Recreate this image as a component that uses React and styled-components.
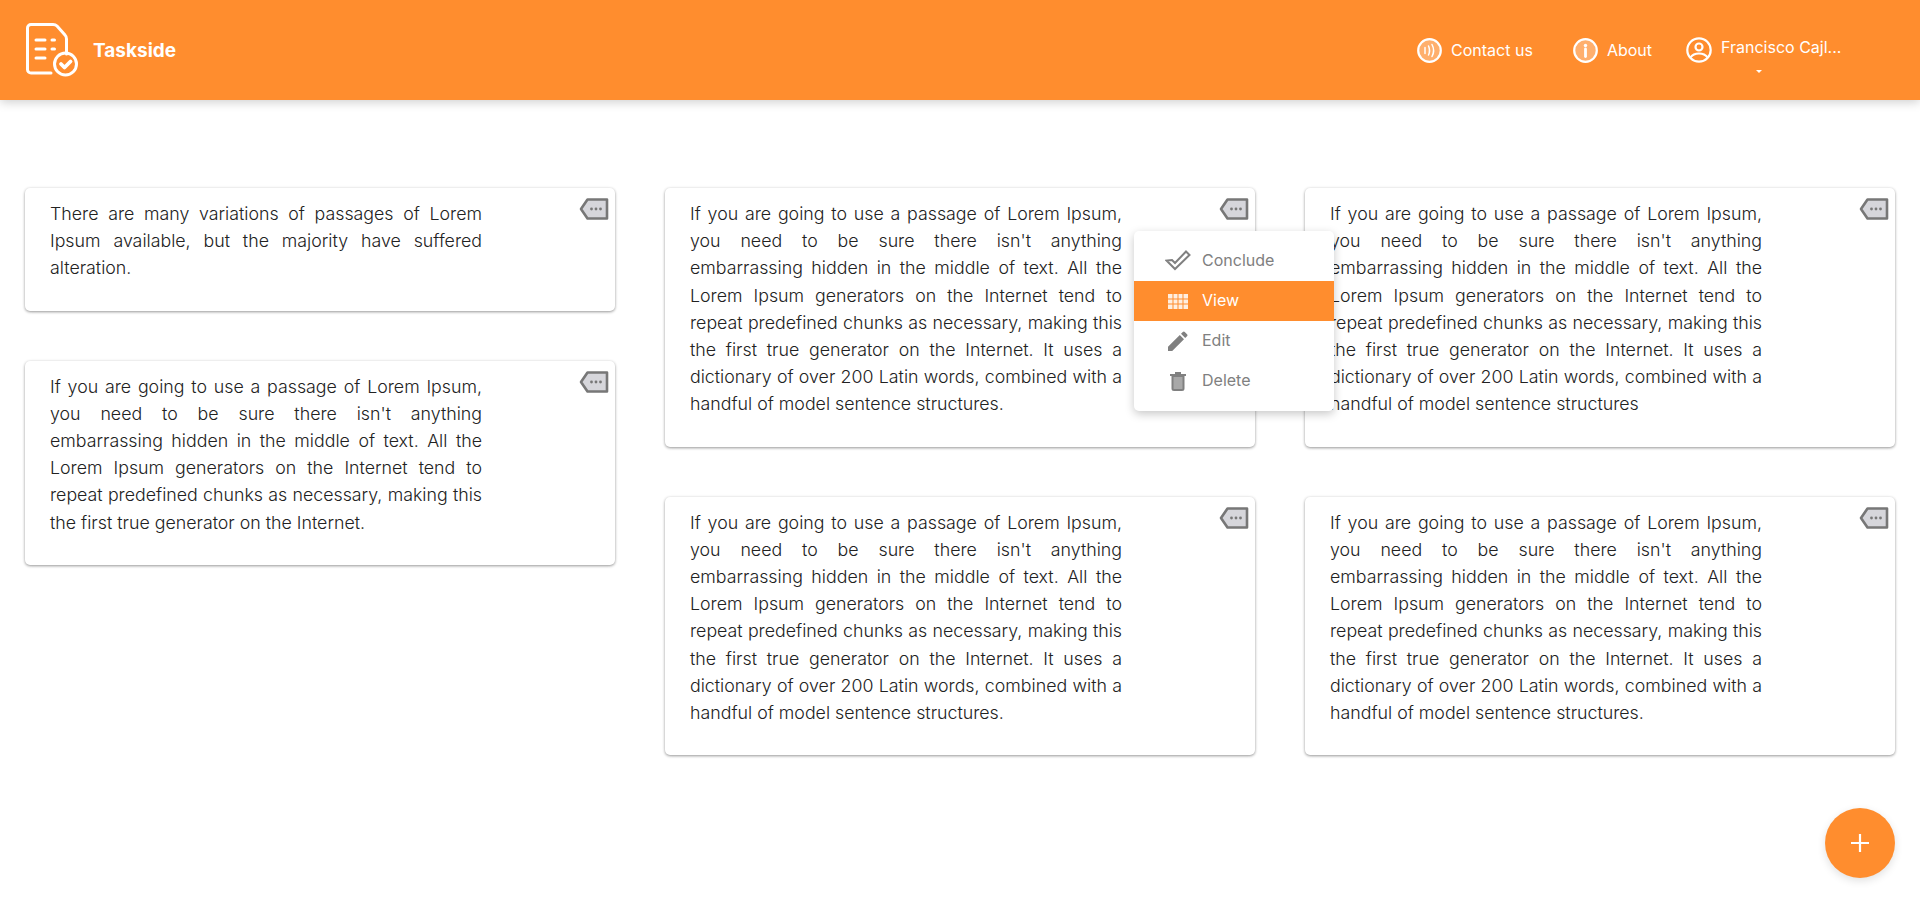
import React from "react";
import styled, { createGlobalStyle } from "styled-components";

const ORANGE = "#ff8d2e";

const GlobalStyle = createGlobalStyle`
  html, body {
    margin: 0;
    padding: 0;
    background: #fff;
    font-family: Inter, "Liberation Sans", sans-serif;
  }
  * { box-sizing: border-box; }
`;

const Page = styled.div`
  height: 900px;
  overflow: hidden;
  position: relative;
`;

const Header = styled.header`
  height: 100px;
  background: ${ORANGE};
  color: #fff;
  display: flex;
  align-items: center;
  justify-content: space-between;
  padding: 0 77px 0 26px;
  box-shadow: 0 2px 10px rgba(0, 0, 0, 0.2);
`;

const Brand = styled.div`
  display: flex;
  align-items: center;
  gap: 14px;
  font-size: 19px;
  font-weight: 700;
`;

const Nav = styled.nav`
  display: flex;
  align-items: center;
  gap: 40px;
  font-size: 16px;
  font-weight: 400;
`;

const NavItem = styled.div`
  display: flex;
  align-items: center;
  gap: 9px;
`;

const UserItem = styled(NavItem)`
  margin-left: -6px;
`;

const UserBlock = styled.div`
  display: flex;
  flex-direction: column;
  align-items: center;
  gap: 13px;
  margin-top: 10px;
`;

const UserName = styled.span`
  width: 122px;
  line-height: 19px;
  white-space: nowrap;
`;

const Caret = styled.span`
  width: 0;
  height: 0;
  margin-right: 46px;
  border-left: 3px solid transparent;
  border-right: 3px solid transparent;
  border-top: 3px solid #fff;
`;

const Board = styled.main`
  display: grid;
  grid-template-columns: repeat(3, 590px);
  gap: 50px;
  padding: 88px 25px 0;
`;

const Column = styled.div`
  display: flex;
  flex-direction: column;
  gap: 50px;
`;

const Card = styled.article`
  position: relative;
  background: #fff;
  border-radius: 5px;
  padding: 12px 133px 29px 25px;
  box-shadow: 0 1px 3px rgba(0, 0, 0, 0.4), 0 0 4px rgba(0, 0, 0, 0.03);
`;

const CardText = styled.p`
  margin: 0;
  font-size: 17.8px;
  font-weight: 300;
  line-height: 27.2px;
  color: #222;
  text-align: justify;
`;

const TagButton = styled.span`
  position: absolute;
  top: 9px;
  right: 6px;
  display: flex;
`;

const Menu = styled.ul`
  position: absolute;
  top: 43px;
  right: -79px;
  width: 200px;
  margin: 0;
  padding: 10px 0;
  list-style: none;
  background: #fff;
  border-radius: 5px;
  box-shadow: 0 3px 10px rgba(0, 0, 0, 0.22);
  z-index: 2;
`;

const MenuItem = styled.li`
  height: 40px;
  display: flex;
  align-items: center;
  gap: 10px;
  padding: 0 0 2px 30px;
  font-size: 16px;
  color: ${(p) => (p.$active ? "#fff" : "#808080")};
  background: ${(p) => (p.$active ? ORANGE : "transparent")};
`;

const Fab = styled.button`
  position: absolute;
  right: 25px;
  bottom: 22px;
  width: 70px;
  height: 70px;
  border: none;
  border-radius: 50%;
  background: ${ORANGE};
  display: flex;
  align-items: center;
  justify-content: center;
  box-shadow: 0 3px 8px rgba(0, 0, 0, 0.12);
`;

const LogoIcon = () => (
  <svg width="53" height="54" viewBox="0 0 53 54" fill="none" stroke="#fff" strokeWidth="3" strokeLinecap="round" strokeLinejoin="round">
    <path d="M25 50H5a3.500 3.500 0 0 1-3.500-3.500V5A3.500 3.500 0 0 1 5 1.500h22c2 0 3 .5 4 1.500l8 9c1 1 1.500 2 1.500 4v15" />
    <path d="M10 17h9M10 26h9M10 35h9M26 17h2.500M26 26h2.500" />
    <circle cx="39.500" cy="41" r="11" />
    <path d="M35 41l3.500 3.500 6-6" strokeWidth="3.800" />
  </svg>
);

const ContactIcon = () => (
  <svg width="25" height="25" viewBox="0 0 25 25" fill="none" stroke="#fff">
    <circle cx="12.500" cy="12.500" r="11.300" strokeWidth="2.200" fill="rgba(255,255,255,0.3)" />
    <path d="M8 9.500v6M11.500 8c1.300 2.800 1.300 6.200 0 9M15 6.500c2 3.700 2 8.300 0 12" strokeWidth="1.500" strokeLinecap="round" />
  </svg>
);

const InfoIcon = () => (
  <svg width="25" height="25" viewBox="0 0 25 25" fill="none" stroke="#fff">
    <circle cx="12.500" cy="12.500" r="11.300" strokeWidth="2.200" fill="rgba(255,255,255,0.3)" />
    <circle cx="12.500" cy="7.500" r="1.700" fill="#fff" stroke="none" />
    <path d="M12.500 11v7.500" strokeWidth="2.800" strokeLinecap="round" />
  </svg>
);

const UserIcon = () => (
  <svg width="26" height="26" viewBox="0 0 26 26" fill="none" stroke="#fff" strokeWidth="2.200">
    <circle cx="13" cy="13" r="11.700" />
    <circle cx="13" cy="10" r="3.500" />
    <path d="M4.500 20.500C6.500 17.500 9.500 16.500 13 16.500s6.500 1 8.500 4" />
  </svg>
);

const TagIcon = () => (
  <svg width="30" height="24" viewBox="0 0 30 24" fill="#d6d6db" stroke="#777" strokeWidth="2.600" strokeLinejoin="round">
    <path d="M28 2.500H8.500L2 12l6.500 9.500H28z" />
    <g fill="#777" stroke="none">
      <circle cx="12.500" cy="12" r="1.400" />
      <circle cx="17" cy="12" r="1.400" />
      <circle cx="21.500" cy="12" r="1.400" />
    </g>
  </svg>
);

const CheckAllIcon = () => (
  <svg width="26" height="22" viewBox="0 0 26 22" fill="none" stroke="#808080" strokeWidth="2">
    <path d="M1.500 10.500l8.500 8.500L24.500 5 21 1.500 10 13l-3-3z" />
  </svg>
);

const GridIcon = () => (
  <svg width="20" height="15" viewBox="0 0 20 15">
    <rect width="20" height="15" fill="#fff" fillOpacity="0.85" />
    <path d="M5 0v15M10 0v15M15 0v15M0 5h20M0 10h20" stroke={ORANGE} strokeWidth="1" />
  </svg>
);

const PencilIcon = () => (
  <svg width="20" height="20" viewBox="0 0 20 20" fill="#808080">
    <path d="M0 20v-4.200L11.800 4l4.200 4.200L4.200 20zM13 2.800l1.800-1.800a1.400 1.400 0 0 1 2 0l2.200 2.200a1.400 1.400 0 0 1 0 2L17.200 7z" />
  </svg>
);

const TrashIcon = () => (
  <svg width="16" height="19" viewBox="0 0 16 19" fill="none" stroke="#808080" strokeWidth="2">
    <path d="M0 3h16M5 1h6" />
    <path d="M2.500 4h11v12.500a1.500 1.500 0 0 1-1.500 1.500H4a1.500 1.500 0 0 1-1.500-1.500z" fill="#a8a8a8" />
  </svg>
);

const PlusIcon = () => (
  <svg width="18" height="18" viewBox="0 0 18 18" stroke="#fff" strokeWidth="2.200">
    <path d="M9 0v18M0 9h18" />
  </svg>
);

const menuItems = [
  { label: "Conclude", icon: <CheckAllIcon /> },
  { label: "View", icon: <GridIcon />, active: true },
  { label: "Edit", icon: <PencilIcon /> },
  { label: "Delete", icon: <TrashIcon /> },
];

const MenuIconBox = styled.span`
  width: 28px;
  display: flex;
  justify-content: center;
  padding-top: 2px;
`;

const SHORT = "There are many variations of passages of Lorem Ipsum available, but the majority have suffered alteration.";
const MEDIUM = "If you are going to use a passage of Lorem Ipsum, you need to be sure there isn't anything embarrassing hidden in the middle of text. All the Lorem Ipsum generators on the Internet tend to repeat predefined chunks as necessary, making this the first true generator on the Internet.";
const LONG = MEDIUM + " It uses a dictionary of over 200 Latin words, combined with a handful of model sentence structures.";

const columns = [
  [{ text: SHORT }, { text: MEDIUM }],
  [{ text: LONG, menu: true }, { text: LONG }],
  [{ text: LONG.slice(0, -1) }, { text: LONG }],
];

function App() {
  return (
    <Page>
      <GlobalStyle />
      <Header>
        <Brand>
          <LogoIcon />
          Taskside
        </Brand>
        <Nav>
          <NavItem>
            <ContactIcon />
            Contact us
          </NavItem>
          <NavItem>
            <InfoIcon />
            About
          </NavItem>
          <UserItem>
            <UserIcon />
            <UserBlock>
              <UserName>Francisco Cajl...</UserName>
              <Caret />
            </UserBlock>
          </UserItem>
        </Nav>
      </Header>
      <Board>
        {columns.map((cards, i) => (
          <Column key={i}>
            {cards.map((card, j) => (
              <Card key={j}>
                <CardText>{card.text}</CardText>
                <TagButton>
                  <TagIcon />
                </TagButton>
                {card.menu && (
                  <Menu>
                    {menuItems.map((item) => (
                      <MenuItem key={item.label} $active={item.active}>
                        <MenuIconBox>{item.icon}</MenuIconBox>
                        {item.label}
                      </MenuItem>
                    ))}
                  </Menu>
                )}
              </Card>
            ))}
          </Column>
        ))}
      </Board>
      <Fab>
        <PlusIcon />
      </Fab>
    </Page>
  );
}

export default App;
